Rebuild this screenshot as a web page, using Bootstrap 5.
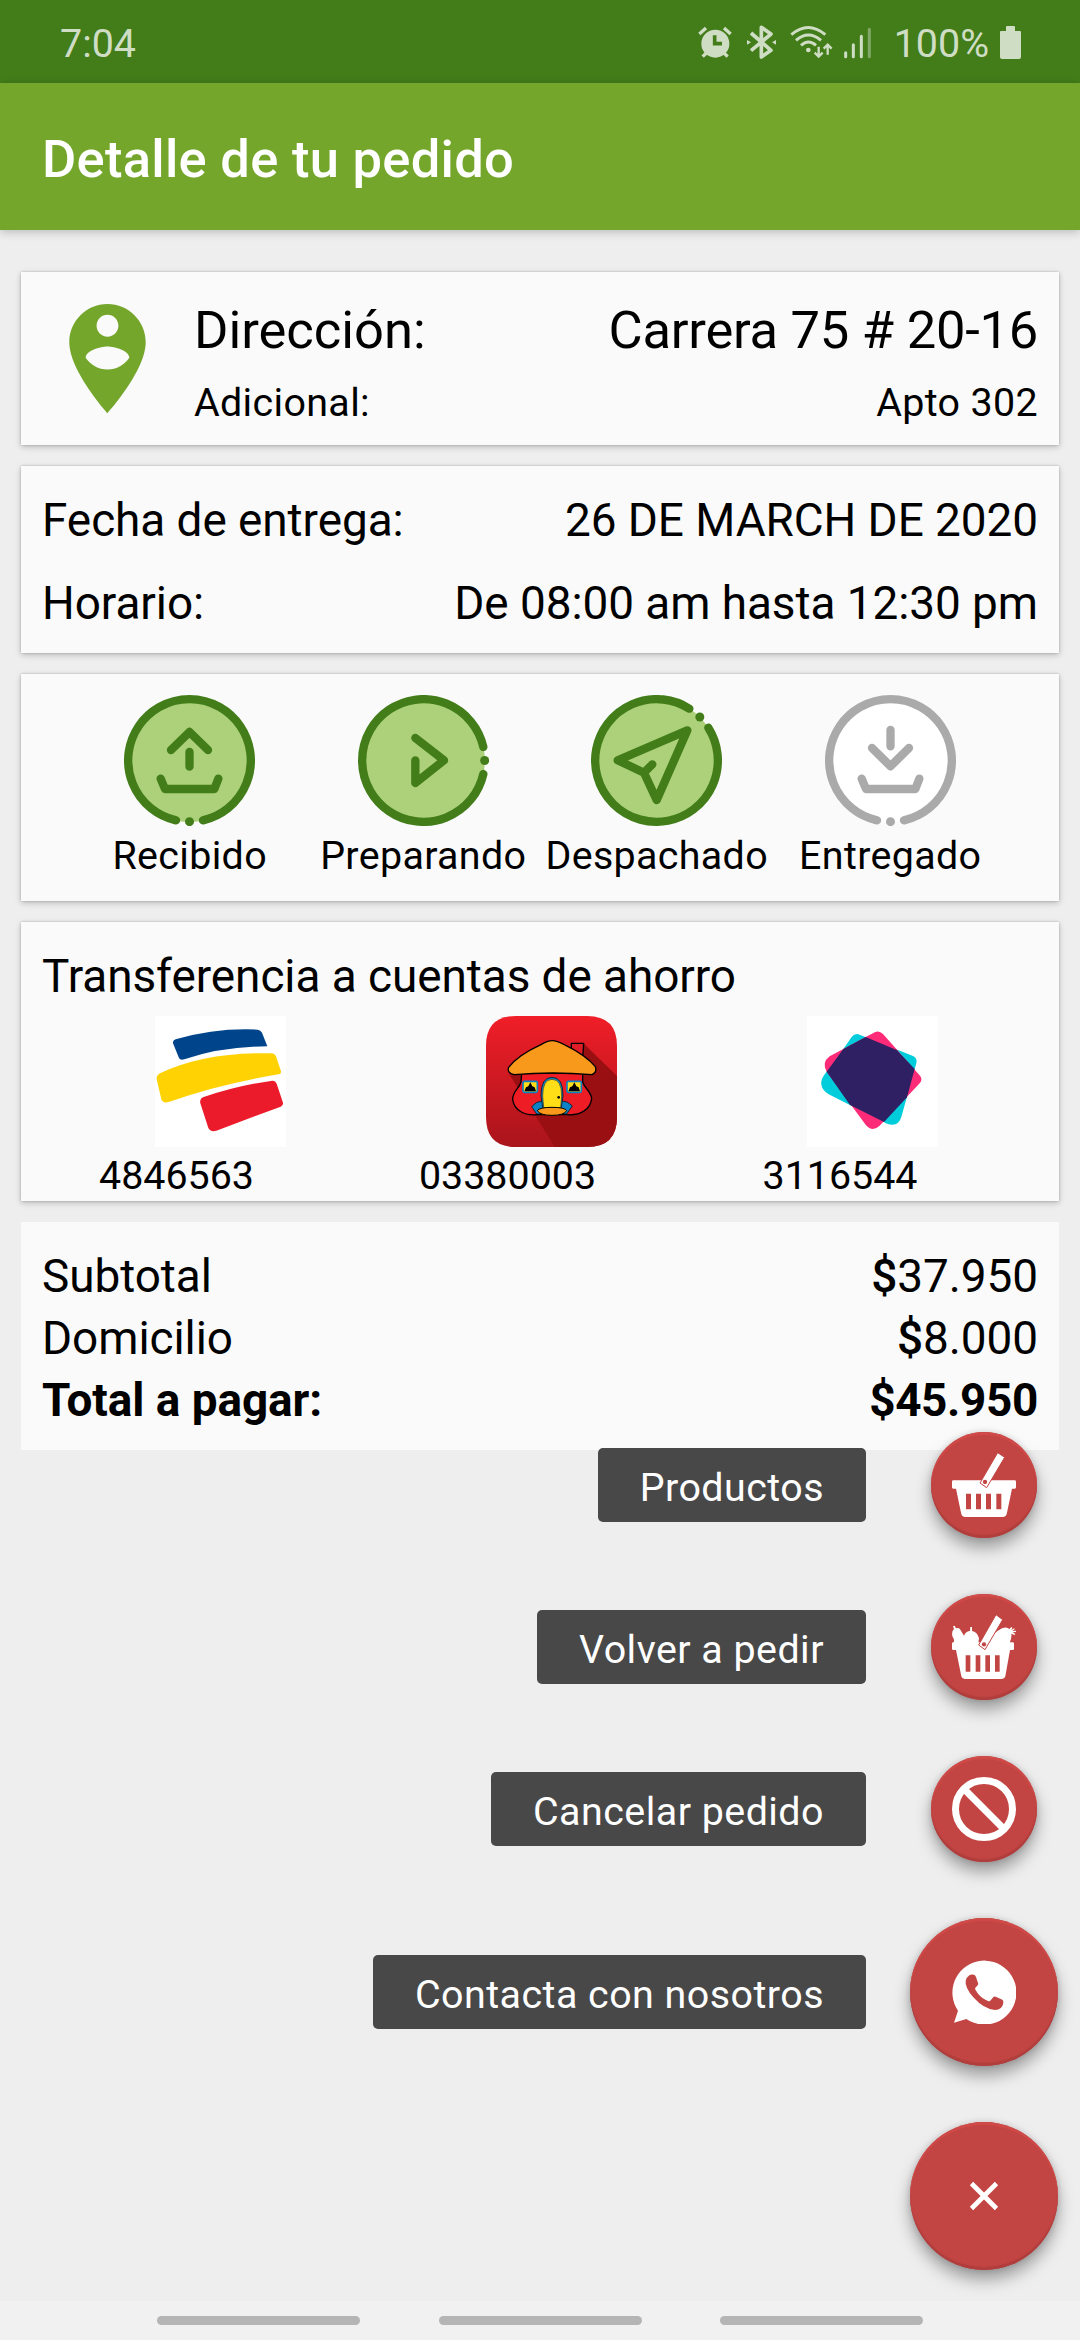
<!DOCTYPE html>
<html lang="es">
<head>
<meta charset="utf-8">
<meta name="viewport" content="width=device-width, initial-scale=1">
<title>Detalle de tu pedido</title>
<link href="https://cdn.jsdelivr.net/npm/bootstrap@5.3.0/dist/css/bootstrap.min.css" rel="stylesheet">
<style>
  body { font-family: Roboto, "Liberation Sans", sans-serif; background: #eee; color: #000; width: 1080px; height: 2340px; overflow: hidden; }
  svg { display: block; flex: none; }
  .status-bar { height: 83px; background: #427d1a; color: #d0ddc5; font-size: 39.4px; line-height: 83px; padding: 4px 59px 0 60px; }
  .status-bar .signals { margin: -3px 22px 0 0; }
  .status-bar .battery { margin: -3px 0 0 11px; }
  .app-bar { height: 147px; background: #74a62b; padding: 4px 42px 0; box-shadow: 0 2px 9px rgba(0,0,0,.22); }
  .app-bar h1 { font-size: 52.5px; font-weight: 500; line-height: 62px; letter-spacing: .28px; }
  .content { padding: 42px 21px 0; gap: 21px; }
  .panel { background: #fafafa; box-shadow: 0 2px 6px rgba(0,0,0,.22), 0 0 2px rgba(0,0,0,.22); padding: 0 21px; }
  .address { height: 173px; gap: 21px; }
  .address .t-lg { margin-top: 7px; margin-bottom: 19px; }
  .address .t-lg span:last-child { letter-spacing: -.25px; }
  .address .t-sm { letter-spacing: .35px; }
  .schedule { height: 187px; padding-top: 27px; }
  .schedule .t-md + .t-md { margin-top: 29px; }
  .steps { height: 227px; padding: 21px 52px 0; letter-spacing: .35px; }
  .steps .step { gap: 7px; width: 233.7px; }
  .banks { height: 279px; padding-top: 27px; }
  .bank-logos { margin-top: 13px; padding-left: 113px; }
  .bank-logos svg:nth-child(2) { margin-left: 200px; }
  .bank-logos svg:nth-child(3) { margin-left: 190px; }
  .accounts { margin: 6px -21px 0; }
  .accounts span:nth-child(1) { width: 311px; }
  .accounts span:nth-child(2) { width: 351px; }
  .accounts span:nth-child(3) { width: 314px; }
  .totals { height: 228px; padding-top: 23px; box-shadow: none; }
  .totals .t-md { line-height: 62px; }
  .totals .fw-bold span:last-child { letter-spacing: -.35px; }
  .currency { font-weight: 500; }
  .t-lg { font-size: 52.5px; line-height: 62px; }
  .t-md { font-size: 45.9px; line-height: 54px; letter-spacing: -.05px; }
  .t-sm { font-size: 39.4px; line-height: 46px; }
  .speed-dial { right: 22px; top: 1432px; }
  .speed-dial .dial-row { gap: 44px; }
  .speed-dial .small-row { padding-right: 21px; gap: 65px; height: 106px; margin-bottom: 56px; }
  .dial-label { background: #484848; color: #fff; height: 74px; border-radius: 5px; font-size: 39.4px; letter-spacing: .47px; line-height: 70px; padding: 5px 42px 0; }
  .fab { width: 148px; height: 148px; background: #c24543; border-radius: 50%; box-shadow: 0 10px 16px rgba(0,0,0,.34), 0 0 6px rgba(0,0,0,.14), inset 0 3px 1px #cf4a48, inset 0 -3px 1px #b03e3c; }
  .small-row .fab { width: 106px; height: 106px; }
  .nav-strip { height: 39px; background: #f1f1f1; padding-left: 157px; padding-top: 15px; gap: 78.5px; }
  .nav-strip span { width: 203px; height: 9px; border-radius: 5px; background: #b5b5b5; }
  .ico-line { fill: none; stroke: currentColor; stroke-width: 25; stroke-linecap: round; stroke-linejoin: round; }
  .done { color: #427d1a; }
  .pending { color: #aaa; }
</style>
</head>
<body class="position-relative">
<header>
  <div class="status-bar d-flex align-items-center justify-content-between">
    <span>7:04</span>
    <div class="d-flex align-items-center">
      <svg class="signals" width="174" height="36" viewBox="114 70 522 108" fill="#d0ddc5" stroke="#d0ddc5">
        <!-- alarm -->
        <g stroke-width="10"><circle cx="166" cy="129" r="37"/><path d="M118 100l20-18M212 100l-20-18M128 168l14-14M203 168l-14-14" fill="none"/><path d="M164 104v25h22" fill="none" stroke="#427d1a" stroke-width="11"/></g>
        <!-- bluetooth -->
        <path d="M273 97l60 52-29 20V80l29 20-60 50" fill="none" stroke-width="11" stroke-linejoin="round"/>
        <path d="M261 118v14l12-7zM348 118v14l-12-7z" stroke="none"/>
        <!-- wifi -->
        <g fill="none" stroke-width="9"><path d="M394 102q50-43 102 0M408 119q37-32 75 0M423 134q22-20 45 0"/><path d="M476 138v28M464 156l12 12 12-12M503 162v-28M491 144l12-12 12 12" stroke-width="7"/></g>
        <circle cx="445" cy="148" r="7" stroke="none"/>
        <!-- signal -->
        <g fill="none" stroke-width="9" stroke-linecap="round"><path d="M557 156v12M580 132v36M604 107v61"/><path d="M628 86v82" opacity=".45"/></g>
      </svg>
      <span>100%</span>
      <svg class="battery" width="21" height="33" viewBox="0 0 21 33" fill="#d0ddc5"><path d="M6 1q0-1 1-1h7q1 0 1 1v4h5q1 0 1 1v25q0 2-2 2H2q-2 0-2-2V6q0-1 1-1h5z"/></svg>
    </div>
  </div>
  <div class="app-bar position-relative d-flex align-items-center">
    <h1 class="text-white m-0">Detalle de tu pedido</h1>
  </div>
</header>

<main class="content d-flex flex-column">
  <section class="panel address d-flex align-items-center">
    <svg width="131" height="131" viewBox="0 0 24 24" fill="#74a62b"><path d="M12 2C8.14 2 5 5.14 5 9c0 5.25 7 13 7 13s7-7.75 7-13c0-3.86-3.14-7-7-7zm0 2c1.1 0 2 .9 2 2s-.9 2-2 2-2-.9-2-2 .9-2 2-2zm0 10c-1.67 0-3.14-.85-4-2.15.02-1.32 2.67-2.05 4-2.05s3.98.73 4 2.05c-.86 1.3-2.33 2.15-4 2.15z"/></svg>
    <div class="flex-grow-1">
      <div class="t-lg d-flex justify-content-between"><span>Dirección:</span><span>Carrera 75 # 20-16</span></div>
      <div class="t-sm d-flex justify-content-between"><span>Adicional:</span><span>Apto 302</span></div>
    </div>
  </section>

  <section class="panel schedule">
    <div class="t-md d-flex justify-content-between"><span>Fecha de entrega:</span><span>26 DE MARCH DE 2020</span></div>
    <div class="t-md d-flex justify-content-between"><span>Horario:</span><span>De 08:00 am hasta 12:30 pm</span></div>
  </section>

  <section class="panel steps d-flex">
    <div class="step d-flex flex-column align-items-center">
      <svg class="done" width="131" height="131" viewBox="0 0 393 393"><circle cx="196.5" cy="196.5" r="184" fill="#add17a"/><path class="ico-line" d="M156 376A184 184 0 1 1 237 376M141 165L196.500 111 252 165M196.500 171V215M110 251L123 282H271L283 251"/><circle cx="196.500" cy="380" r="13.500" fill="currentColor"/></svg>
      <span class="t-sm">Recibido</span>
    </div>
    <div class="step d-flex flex-column align-items-center">
      <svg class="done" width="131" height="131" viewBox="0 0 393 393"><circle cx="196.5" cy="196.5" r="184" fill="#add17a"/><path class="ico-line" d="M376 156A184 184 0 1 0 376 237M172 129L258 196 172 264V196"/><circle cx="380" cy="196.500" r="13.500" fill="currentColor"/></svg>
      <span class="t-sm">Preparando</span>
    </div>
    <div class="step d-flex flex-column align-items-center">
      <svg class="done" width="131" height="131" viewBox="0 0 393 393"><circle cx="196.5" cy="196.5" r="184" fill="#add17a"/><path class="ico-line" d="M295 41A184 184 0 1 0 352 98M289 106L80 196 159 233 197 315ZM159 233L184 208"/><circle cx="326.500" cy="66" r="13.500" fill="currentColor"/></svg>
      <span class="t-sm">Despachado</span>
    </div>
    <div class="step d-flex flex-column align-items-center">
      <svg class="pending" width="131" height="131" viewBox="0 0 393 393"><circle cx="196.5" cy="196.5" r="184" fill="#fff"/><path class="ico-line" d="M156 376A184 184 0 1 1 237 376M141 159L196.500 214 252 159M196.500 105V154M110 251L123 282H271L283 251"/><circle cx="196.500" cy="380" r="13.500" fill="currentColor"/></svg>
      <span class="t-sm">Entregado</span>
    </div>
  </section>

  <section class="panel banks">
    <div class="t-md">Transferencia a cuentas de ahorro</div>
    <div class="bank-logos d-flex">
      <svg width="131" height="131" viewBox="0 0 393 393"><path fill="#fff" d="M0 0h393v393H0z"/>
        <path fill="#00448c" d="M54 82Q52 73 62 70Q185 35 308 41Q317 42 321 50L337 91Q200 92 88 130Q76 134 72 126Z"/>
        <path fill="#ffd303" d="M5 190Q4 178 15 172Q150 108 348 112Q359 112 363 121L378 166Q379 174 371 175Q190 205 48 256Q24 265 19 250Z"/>
        <path fill="#eb1b2c" d="M136 262Q133 248 146 243Q250 208 352 194Q361 193 365 203L383 257Q387 268 377 272L184 344Q166 349 160 336Z"/>
      </svg>
      <svg width="131" height="131" viewBox="0 0 393 393">
        <defs><linearGradient id="redTile" x1="0" y1="0" x2="0" y2="1"><stop offset="0" stop-color="#f01e28"/><stop offset="1" stop-color="#aa141b"/></linearGradient>
        <clipPath id="tileClip"><path d="M90 0H303Q393 0 393 90V303Q393 393 303 393H90Q0 393 0 303V90Q0 0 90 0Z"/></clipPath></defs>
        <g clip-path="url(#tileClip)"><path fill="url(#redTile)" d="M0 0h393v393H0z"/><path fill="#990f12" d="M292 82L393 180V393H207L67 170Z"/></g>
        <g stroke="#000" stroke-width="4" stroke-linejoin="round">
          <path fill="#e01c26" d="M256 82H293L290 125 256 105Z"/>
          <path fill="#ee1c25" d="M107 172L105 198C100 218 80 225 80 250C84 282 115 300 152 296H242C285 300 314 278 317 247C314 225 296 218 290 198V172Z"/>
          <path fill="#f9991c" d="M199 74Q212 74 235 86Q300 118 328 152Q334 168 318 176Q199 166 84 176Q62 170 68 154Q95 118 165 86Q184 74 199 74Z"/>
          <path fill="#0b82c5" stroke-width="2" d="M137 272Q150 256 168 255H230Q247 256 259 270L242 294H152Z"/>
        </g>
        <g fill="#ffde17" stroke="#0b82c5" stroke-width="5"><rect x="111" y="196" width="43" height="33" rx="4"/><rect x="243" y="196" width="43" height="33" rx="4"/></g>
        <path d="M115 226l5-12 7-3 6-12 6 12 7 3 4 12zM247 226l5-12 7-3 6-12 6 12 7 3 4 12z"/>
        <path fill="#0b82c5" stroke="#000" stroke-width="2" d="M165 240Q164 184 198 184Q232 184 231 240L226 274H170Z"/>
        <path fill="#ffde17" stroke="#333" stroke-width="2" d="M170 240Q170 190 198 190Q227 190 227 240L224 275H173Z"/>
        <circle cx="218" cy="244" r="4"/>
        <path fill="#f9991c" stroke="#000" stroke-width="3" d="M154 284Q160 274 198 274Q237 274 242 284Q234 298 198 298Q162 298 154 284Z"/>
      </svg>
      <svg width="131" height="131" viewBox="0 0 393 393"><path fill="#fff" d="M0 0h393v393H0z"/>
        <path fill="#00cddc" d="M109 99L134 63Q144 50 158 56L318 120Q332 127 328 142L283 303Q274 334 240 323L65 235Q28 210 52 176Z"/>
        <path fill="#ff2a78" d="M176 63L205 48Q217 43 228 54L339 179Q348 190 338 202L217 330Q196 349 177 328L59 167Q43 140 68 121L109 99Z"/>
        <path fill="#2f1f63" d="M176 63L269 102 323 159 300 244 231 318 129 267 59 167 109 99Z"/>
      </svg>
    </div>
    <div class="accounts t-sm d-flex text-center"><span>4846563</span><span>03380003</span><span>3116544</span></div>
  </section>

  <section class="panel totals">
    <div class="t-md d-flex justify-content-between"><span>Subtotal</span><span><span class="currency">$</span>37.950</span></div>
    <div class="t-md d-flex justify-content-between"><span>Domicilio</span><span><span class="currency">$</span>8.000</span></div>
    <div class="t-md d-flex justify-content-between fw-bold"><span>Total a pagar:</span><span>$45.950</span></div>
  </section>
</main>

<div class="speed-dial position-absolute d-flex flex-column align-items-end">
  <div class="dial-row small-row d-flex align-items-center">
    <span class="dial-label">Productos</span>
    <a class="fab d-flex align-items-center justify-content-center">
      <svg width="64" height="64" viewBox="0 0 192 192"><path fill="#fff" d="M4 82H188Q192 82 192 86V103Q192 107 188 107H180L164 184Q162 192 154 192H38Q30 192 28 184L12 107H4Q0 107 0 103V86Q0 82 4 82Z"/>
        <path fill="#c24543" d="M42 122h15v47H42zM72 122h15v47H72zM102 122h15v47h-15zM133 122h15v47h-15z"/>
        <path fill="#fff" stroke="#c24543" stroke-width="3" d="M137 -1L158 13 104 104 84 90Z"/><circle cx="99" cy="87" r="6.500" fill="#c24543"/></svg>
    </a>
  </div>
  <div class="dial-row small-row d-flex align-items-center">
    <span class="dial-label">Volver a pedir</span>
    <a class="fab d-flex align-items-center justify-content-center">
      <svg width="64" height="64" viewBox="0 0 192 192"><g fill="#fff">
        <path d="M4 82H182Q186 82 186 86V101Q186 105 182 105H174L160 184Q158 192 150 192H38Q30 192 28 184L12 105H4Q0 105 0 101V86Q0 82 4 82Z"/>
        <path d="M3 86Q10 76 2 66Q-3 50 6 42L3 34 8 32 12 40Q22 36 26 46L36 62Q42 48 54 48L55 36H60V48Q76 50 81 70L78 90H3ZM106 84Q122 54 150 40Q164 34 172 42L178 36 181 38 178 45 187 40 188 43 181 48 192 47V51L182 52 190 57 188 60 178 56Q180 70 172 86H106Z"/></g>
        <path fill="#c24543" d="M41 121h14v49H41zM71 121h14v49H71zM100 121h14v49h-14zM129 121h14v49h-14z"/>
        <path fill="#fff" stroke="#c24543" stroke-width="3" d="M132 -1L152 14 99 104 80 90Z"/><circle cx="96" cy="88" r="6.500" fill="#c24543"/></svg>
    </a>
  </div>
  <div class="dial-row small-row d-flex align-items-center">
    <span class="dial-label">Cancelar pedido</span>
    <a class="fab d-flex align-items-center justify-content-center">
      <svg width="64" height="64" viewBox="0 0 192 192" fill="none" stroke="#fff" stroke-width="21"><circle cx="96" cy="96" r="85.500"/><path d="M40 40L152 152"/></svg>
    </a>
  </div>
  <div class="dial-row d-flex align-items-center mb-5 pb-2">
    <span class="dial-label">Contacta con nosotros</span>
    <a class="fab d-flex align-items-center justify-content-center">
      <svg width="64" height="64" viewBox="0 0 192 192"><path fill="#fff" d="M6 188L18 152A96 96 0 1 1 43 177Z"/>
        <path fill="#c24543" d="M52 46Q57 42 66 44Q70 45 72 51L79 72Q77 77 70 83Q68 86 71 91Q84 114 108 123Q113 125 116 121L125 110Q129 108 133 111L151 119Q155 121 154 129Q151 149 129 150Q96 148 64 112Q38 82 41 63Q43 52 52 46Z"/></svg>
    </a>
  </div>
  <a class="fab d-flex align-items-center justify-content-center">
    <svg width="32" height="32" viewBox="0 0 32 32" stroke="#fff" stroke-width="4.700"><path d="M3.500 3.500L28.500 28.500M28.500 3.500L3.500 28.500"/></svg>
  </a>
</div>

<footer class="nav-strip position-absolute bottom-0 start-0 w-100 d-flex"><span></span><span></span><span></span></footer>
<script src="https://cdn.jsdelivr.net/npm/bootstrap@5.3.0/dist/js/bootstrap.bundle.min.js"></script>
</body>
</html>
